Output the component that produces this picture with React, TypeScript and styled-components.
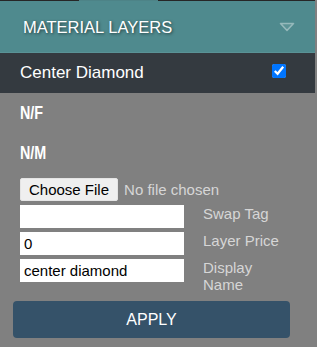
import React from "react";
import styled, { createGlobalStyle } from "styled-components";

const GlobalStyle = createGlobalStyle`
  html, body {
    margin: 0;
    padding: 0;
    background: #808080;
    font-family: "Liberation Sans", Arial, sans-serif;
  }
  * { box-sizing: border-box; }
`;

const Panel = styled.div`
  width: 315px;
  display: flex;
  flex-direction: column;
  background: #808080;
`;

const TabStrip = styled.div`
  display: flex;
  height: 1px;
`;

const TabEdge = styled.div<{ $active?: boolean }>`
  width: 79px;
  background: ${(p) => (p.$active ? "#4d8387" : "#262626")};
`;

const Header = styled.div`
  height: 52px;
  background: #4f8a8e;
  display: flex;
  align-items: center;
  justify-content: space-between;
  padding: 1px 20px 0 23px;
  border-bottom: 1px solid #5a9296;
`;

const HeaderTitle = styled.span`
  color: #ffffff;
  font-size: 16.5px;
  text-transform: uppercase;
  text-shadow: 1px 1px 3px rgba(0, 0, 0, 0.55);
`;

const LayerRow = styled.div`
  height: 40px;
  background: #343a40;
  display: flex;
  align-items: center;
  justify-content: space-between;
  padding: 0 29px 0 20px;
  color: #ffffff;
  font-size: 17px;
`;

const Check = styled.input`
  width: 14px;
  height: 14px;
  margin: 0 0 4px 0;
  accent-color: #0075ff;
`;

const InfoRow = styled.div`
  height: 40px;
  display: flex;
  align-items: center;
  padding-left: 20px;
  color: #ffffff;
  font-size: 17.5px;
  font-weight: bold;
`;

const NarrowText = styled.span`
  display: inline-block;
  transform: scaleX(0.82);
  transform-origin: left center;
`;

const Form = styled.div`
  display: flex;
  flex-direction: column;
  gap: 4px;
  padding: 5px 0 0 20px;
`;

const FileRow = styled.label`
  display: flex;
  align-items: center;
  height: 23px;
  font-size: 15px;
`;

const HiddenFile = styled.input`
  display: none;
`;

const FileButton = styled.span`
  height: 23px;
  display: inline-flex;
  align-items: center;
  padding: 0 8px;
  background: #efefef;
  border: 1px solid #e4e4e4;
  border-radius: 2px;
  color: #000000;
`;

const FileStatus = styled.span`
  margin-left: 6px;
  color: #d6d6d6;
`;

const FieldRow = styled.div`
  display: grid;
  grid-template-columns: 164px 88px;
  column-gap: 19px;
  align-items: start;
`;

const TextField = styled.input`
  width: 164px;
  height: 23px;
  border: none;
  outline: none;
  padding: 0 4px;
  background: #ffffff;
  color: #000000;
  font-family: "Liberation Sans", Arial, sans-serif;
  font-size: 15px;
`;

const FieldLabel = styled.span`
  color: #d6d6d6;
  font-size: 15px;
  line-height: 17px;
`;

const ApplyButton = styled.button`
  margin: 8px 0 0 13px;
  width: 277px;
  height: 37px;
  border: none;
  border-radius: 4px;
  background: #355269;
  color: #ffffff;
  font-family: "Liberation Sans", Arial, sans-serif;
  font-size: 16px;
  text-transform: uppercase;
  cursor: pointer;
`;

const Chevron = () => (
  <svg width="16" height="10" viewBox="0 0 16 10">
    <polygon
      points="1.5,1.5 14.5,1.5 8,8.5"
      fill="rgba(255,255,255,0.08)"
      stroke="rgba(255,255,255,0.38)"
      strokeWidth="1.6"
      strokeLinejoin="round"
    />
  </svg>
);

export default function App() {
  return (
    <>
      <GlobalStyle />
      <Panel>
        <TabStrip>
          <TabEdge />
          <TabEdge $active />
          <TabEdge />
          <TabEdge />
        </TabStrip>
        <Header>
          <HeaderTitle>Material Layers</HeaderTitle>
          <Chevron />
        </Header>
        <LayerRow>
          <span>Center Diamond</span>
          <Check type="checkbox" defaultChecked />
        </LayerRow>
        <InfoRow>
          <NarrowText>N/F</NarrowText>
        </InfoRow>
        <InfoRow>
          <NarrowText>N/M</NarrowText>
        </InfoRow>
        <Form>
          <FileRow>
            <HiddenFile type="file" />
            <FileButton>Choose File</FileButton>
            <FileStatus>No file chosen</FileStatus>
          </FileRow>
          <FieldRow>
            <TextField type="text" defaultValue="" />
            <FieldLabel>Swap Tag</FieldLabel>
          </FieldRow>
          <FieldRow>
            <TextField type="text" defaultValue="0" />
            <FieldLabel>Layer Price</FieldLabel>
          </FieldRow>
          <FieldRow>
            <TextField type="text" defaultValue="center diamond" />
            <FieldLabel>Display Name</FieldLabel>
          </FieldRow>
        </Form>
        <ApplyButton type="button">Apply</ApplyButton>
      </Panel>
    </>
  );
}
